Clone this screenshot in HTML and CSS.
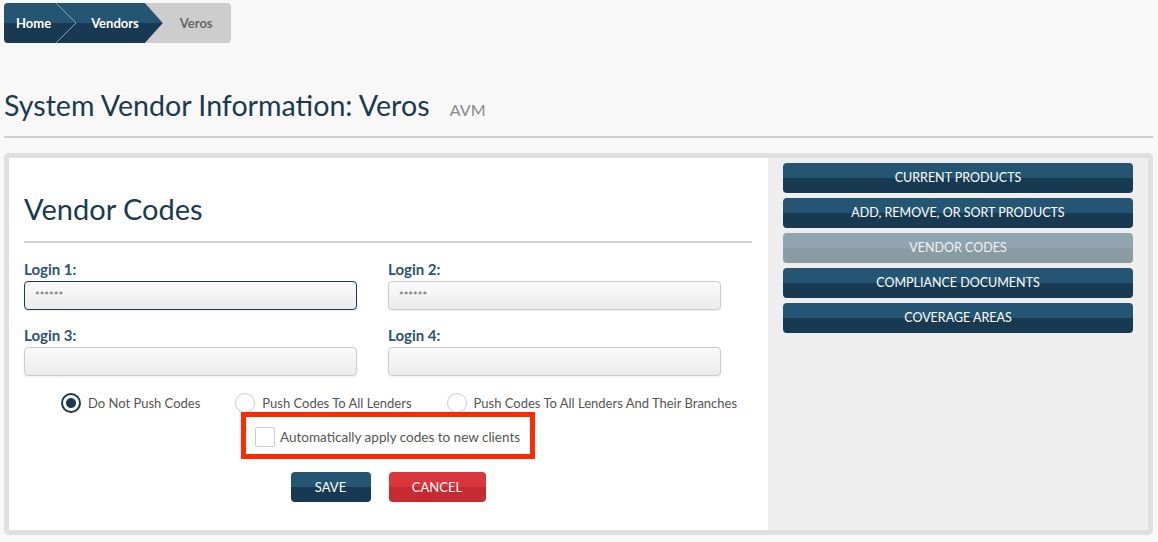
FILE: index.html
```html
<!DOCTYPE html>
<html lang="en">
<head>
    <meta charset="UTF-8">
    <title>System Vendor Information: Veros</title>
    <link rel="stylesheet" href="styles.css">
</head>
<body>
    <nav class="breadcrumb">
        <div class="trail">
            <a class="crumb home" href="#">Home</a>
            <svg class="sep" width="20" height="40" viewBox="0 0 20 40">
                <polyline points="0,0 20,20 0,40" fill="none" stroke="#8aa2b3" stroke-width="1"/>
            </svg>
            <a class="crumb vendors" href="#">Vendors</a>
        </div>
        <span class="crumb current">Veros</span>
    </nav>

    <header class="page-header">
        <h1>System Vendor Information: Veros <small>AVM</small></h1>
    </header>

    <div class="panel">
        <div class="main">
            <h2>Vendor Codes</h2>
            <div class="fields">
                <div class="field">
                    <label for="login1">Login 1:</label>
                    <input id="login1" class="input focused" type="text" value="******">
                </div>
                <div class="field">
                    <label for="login2">Login 2:</label>
                    <input id="login2" class="input" type="text" value="******">
                </div>
                <div class="field">
                    <label for="login3">Login 3:</label>
                    <input id="login3" class="input" type="text" value="">
                </div>
                <div class="field">
                    <label for="login4">Login 4:</label>
                    <input id="login4" class="input" type="text" value="">
                </div>
            </div>

            <div class="radios">
                <label class="radio"><span class="dot checked"></span>Do Not Push Codes</label>
                <label class="radio"><span class="dot"></span>Push Codes To All Lenders</label>
                <label class="radio"><span class="dot"></span>Push Codes To All Lenders And Their Branches</label>
            </div>

            <div class="auto-row">
                <label class="auto-box"><span class="check"></span>Automatically apply codes to new clients</label>
            </div>

            <div class="actions">
                <button class="btn btn-save">SAVE</button>
                <button class="btn btn-cancel">CANCEL</button>
            </div>
        </div>

        <aside class="side">
            <a class="side-btn" href="#">CURRENT PRODUCTS</a>
            <a class="side-btn" href="#">ADD, REMOVE, OR SORT PRODUCTS</a>
            <a class="side-btn active" href="#">VENDOR CODES</a>
            <a class="side-btn" href="#">COMPLIANCE DOCUMENTS</a>
            <a class="side-btn" href="#">COVERAGE AREAS</a>
        </aside>
    </div>
</body>
</html>
```

FILE: styles.css
```css
:root {
    --navy: #1b3a50;
    --navy-top: #245573;
    --navy-bottom: #173a52;
    --label: #2c5472;
    --grey-line: #d0d0d0;
}

body {
    margin: 0;
    padding: 3px 5px 0 4px;
    background: #f8f8f8;
    font-family: Lato, "Open Sans", sans-serif;
    color: #555;
}

/* breadcrumb */
.breadcrumb {
    display: inline-flex;
    align-items: center;
    height: 40px;
    background: #cdcdcd;
    border-radius: 4px;
    overflow: hidden;
}

.trail {
    display: flex;
    align-items: center;
    height: 100%;
    padding: 0 24px 0 12px;
    background: linear-gradient(var(--navy-top) 50%, var(--navy-bottom) 50%);
    clip-path: polygon(0 0, calc(100% - 18px) 0, 100% 50%, calc(100% - 18px) 100%, 0 100%);
}

.crumb {
    font-size: 13px;
    font-weight: bold;
    color: #fff;
    text-decoration: none;
}

.sep {
    margin: 0 15px 0 5px;
}

.crumb.current {
    color: #666;
    padding: 0 18px 0 17px;
}

/* title */
.page-header {
    margin-top: 45px;
    border-bottom: 2px solid var(--grey-line);
    padding-bottom: 9px;
}

.page-header h1 {
    margin: 0;
    font-size: 28.6px;
    font-weight: normal;
    color: var(--navy);
    line-height: 34px;
}

.page-header small {
    font-size: 16px;
    color: #888;
    margin-left: 13px;
}

/* panel */
.panel {
    display: flex;
    margin-top: 15px;
    border: 5px solid #e0e0e0;
    border-radius: 5px;
    background: #eee;
}

.main {
    width: 759px;
    box-sizing: border-box;
    padding: 31px 16px 28px 15px;
    background: #fff;
}

.main h2 {
    margin: 0;
    padding-bottom: 12px;
    border-bottom: 2px solid var(--grey-line);
    font-size: 29px;
    font-weight: normal;
    color: var(--navy);
    line-height: 40px;
}

.fields {
    display: grid;
    grid-template-columns: 1fr 1fr;
    row-gap: 17px;
    margin-top: 18px;
}

.field label {
    display: block;
    font-size: 15px;
    font-weight: bold;
    color: var(--label);
    line-height: 17px;
    margin-bottom: 3px;
}

.input {
    display: block;
    width: calc(100% - 31px);
    height: 29px;
    box-sizing: border-box;
    padding: 0 10px;
    border: 1px solid #ccc;
    border-radius: 4px;
    background: linear-gradient(#fafafa, #ececec);
    box-shadow: 0 1px 2px rgba(0, 0, 0, 0.08);
    font-family: inherit;
    font-size: 11px;
    color: #666;
}

.input.focused {
    border-color: var(--navy);
}

/* radios */
.radios {
    display: flex;
    justify-content: center;
    gap: 35px;
    margin-top: 17px;
    padding-left: 22px;
}

.radio {
    display: flex;
    align-items: center;
    font-size: 13px;
    color: #555;
}

.dot {
    width: 20px;
    height: 20px;
    box-sizing: border-box;
    margin-right: 7px;
    border: 1px solid #ccc;
    border-radius: 50%;
    background: #fff;
}

.dot.checked {
    border: 2px solid var(--navy);
    background: radial-gradient(circle, var(--navy) 4.5px, #fff 5.5px);
}

/* auto apply checkbox */
.auto-row {
    display: flex;
    justify-content: center;
    margin-top: -1px;
}

.auto-box {
    display: flex;
    align-items: center;
    width: 294px;
    height: 47px;
    box-sizing: border-box;
    padding: 2px 0 0 9px;
    border: 5px solid #ff2a00;
    font-size: 13.5px;
    color: #555;
}

.check {
    width: 20px;
    height: 20px;
    box-sizing: border-box;
    margin-right: 5px;
    border: 1px solid #ccc;
    border-radius: 2px;
    background: #fff;
}

/* buttons */
.actions {
    display: flex;
    justify-content: center;
    gap: 18px;
    margin-top: 13px;
}

.btn {
    height: 30px;
    border: none;
    border-radius: 4px;
    font-family: inherit;
    font-size: 13px;
    color: #fff;
    cursor: pointer;
}

.btn-save {
    width: 80px;
    background: linear-gradient(var(--navy-top) 50%, var(--navy-bottom) 50%);
}

.btn-cancel {
    width: 97px;
    background: linear-gradient(#da363c 50%, #c62b31 50%);
}

/* side menu */
.side {
    flex: 1;
    display: flex;
    flex-direction: column;
    gap: 5px;
    padding: 5px 15px;
}

.side-btn {
    display: block;
    height: 30px;
    line-height: 30px;
    border-radius: 4px;
    background: linear-gradient(var(--navy-top) 50%, var(--navy-bottom) 50%);
    color: #fff;
    font-size: 12.5px;
    text-align: center;
    text-decoration: none;
}

.side-btn.active {
    background: linear-gradient(#91a5b0 50%, #8a9ba3 50%);
    color: #eef2f4;
}
```
